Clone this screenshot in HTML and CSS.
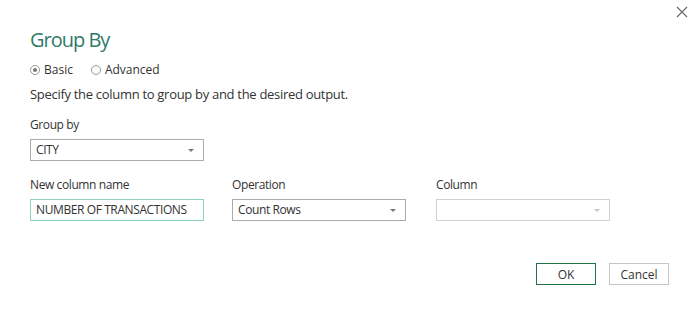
FILE: index.html
```html
<!DOCTYPE html>
<html lang="en">
<head>
    <meta charset="UTF-8">
    <title>Group By</title>
    <link rel="stylesheet" href="styles.css">
</head>
<body>
    <div class="dialog">
        <button class="close" title="Close">
            <svg width="12" height="12" viewBox="0 0 12 12"><path d="M1 1 L11 11 M11 1 L1 11" stroke="#6b6b6b" stroke-width="1.2" fill="none"/></svg>
        </button>

        <h1 class="title">Group By</h1>

        <div class="modes">
            <label class="radio"><span class="dot checked"></span>Basic</label>
            <label class="radio"><span class="dot"></span>Advanced</label>
        </div>

        <p class="intro">Specify the column to group by and the desired output.</p>

        <div class="field">
            <div class="label">Group by</div>
            <div class="select">CITY<span class="arrow"></span></div>
        </div>

        <div class="row">
            <div class="field">
                <div class="label">New column name</div>
                <div class="input focused">NUMBER OF TRANSACTIONS</div>
            </div>
            <div class="field">
                <div class="label">Operation</div>
                <div class="select">Count Rows<span class="arrow"></span></div>
            </div>
            <div class="field">
                <div class="label">Column</div>
                <div class="select disabled"><span class="arrow"></span></div>
            </div>
        </div>

        <div class="buttons">
            <button class="btn primary">OK</button>
            <button class="btn">Cancel</button>
        </div>
    </div>
</body>
</html>
```

FILE: styles.css
```css
body {
    margin: 0;
    background: #fff;
    font-family: "Open Sans", "Noto Sans", sans-serif;
    color: #333;
}
.dialog {
    position: relative;
    width: 696px;
    height: 309px;
    box-sizing: border-box;
    padding: 26px 27px 0 30px;
}
.close {
    position: absolute;
    top: 5px;
    right: 7px;
    background: none;
    border: none;
    padding: 0;
    width: 14px;
    height: 14px;
    display: flex;
    align-items: center;
    justify-content: center;
}
.title {
    margin: 0;
    font-size: 20px;
    font-weight: normal;
    letter-spacing: -1px;
    color: #2f7a6a;
    line-height: 28px;
}
.modes {
    display: flex;
    gap: 18px;
    margin-top: 8px;
    font-size: 12px;
    line-height: 16px;
}
.radio {
    display: flex;
    align-items: center;
    gap: 4px;
}
.dot {
    width: 10px;
    height: 10px;
    border: 1px solid #999;
    border-radius: 50%;
    box-sizing: border-box;
    display: inline-block;
    position: relative;
}
.dot.checked::after {
    content: "";
    position: absolute;
    left: 2px;
    top: 2px;
    width: 4px;
    height: 4px;
    border-radius: 50%;
    background: #777;
}
.intro {
    margin: 7px 0 0;
    font-size: 13px;
    letter-spacing: -0.3px;
    line-height: 18px;
}
.field {
    width: 174px;
    font-size: 12px;
    letter-spacing: -0.4px;
}
.intro + .field {
    margin-top: 14px;
}
.label {
    line-height: 16px;
    margin-bottom: 6px;
}
.select, .input {
    height: 22px;
    box-sizing: border-box;
    border: 1px solid #ababab;
    padding: 0 5px;
    line-height: 20px;
    font-size: 12px;
    display: flex;
    align-items: center;
    justify-content: space-between;
    color: #333;
}
.input.focused {
    border-color: #8fd4b4;
}
.select.disabled {
    border-color: #d0d0d0;
}
.arrow {
    width: 0;
    height: 0;
    border-left: 3px solid transparent;
    border-right: 3px solid transparent;
    border-top: 3px solid #777;
    margin-left: auto;
    margin-right: 4px;
}
.select.disabled .arrow {
    border-top-color: #c8c8c8;
}
.row {
    display: flex;
    gap: 28px;
    margin-top: 16px;
}
.row .field + .field + .field {
    margin-left: 2px;
}
.buttons {
    display: flex;
    justify-content: flex-end;
    gap: 13px;
    margin-top: 42px;
}
.btn {
    width: 60px;
    height: 22px;
    background: #fff;
    border: 1px solid #c6c6c6;
    font-family: inherit;
    font-size: 12px;
    color: #333;
    padding: 0;
}
.btn.primary {
    border-color: #217346;
}
```
